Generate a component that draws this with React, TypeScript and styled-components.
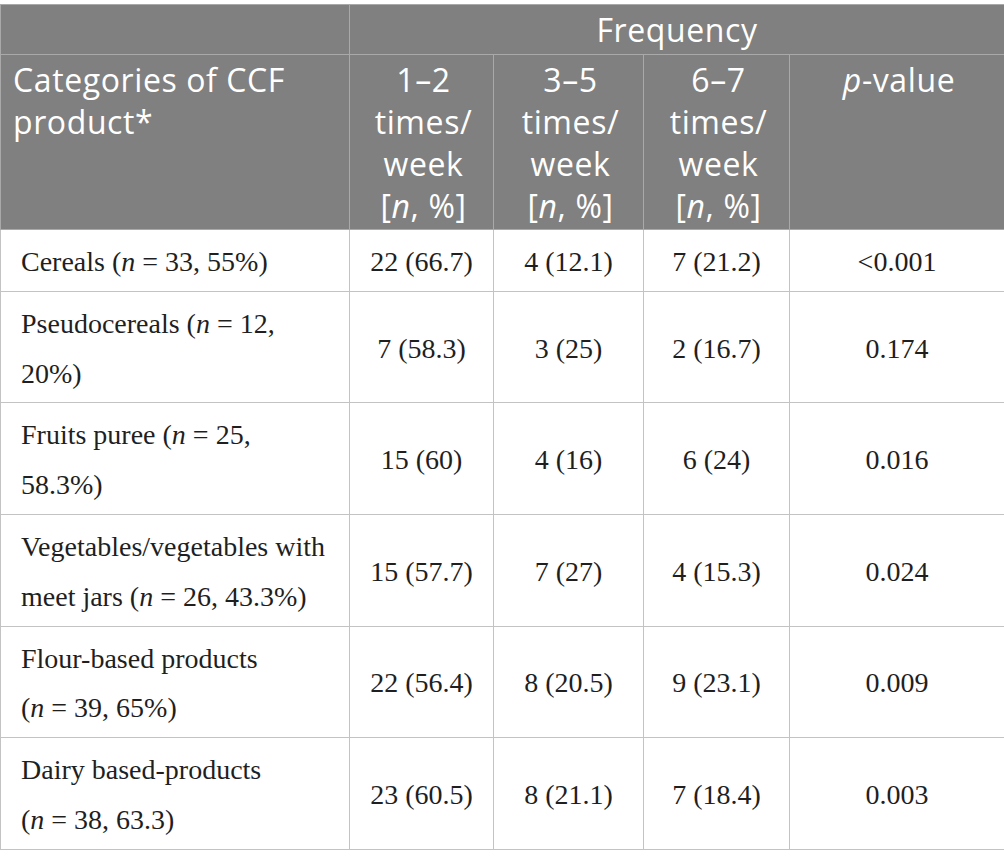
import React from "react";
import styled, { createGlobalStyle } from "styled-components";

const Global = createGlobalStyle`
  html, body { margin: 0; padding: 0; background: #ffffff; }
  body { width: 1004px; }
`;

const Page = styled.div`
  padding-top: 4px;
`;

const Table = styled.table`
  width: 1004px;
  border-collapse: collapse;
  table-layout: fixed;
  border: 1px solid #c3c3c3;
`;

const Head = styled.thead`
  background: #808080;
  color: #ffffff;
  font-family: "Open Sans", "DejaVu Sans", sans-serif;
  font-size: 32px;
  letter-spacing: 0.6px;
  line-height: 42px;
`;

const HeadCell = styled.th<{ $align?: "left" | "center"; $top?: boolean }>`
  border: 1px solid #a9a9a9;
  font-weight: 400;
  text-align: ${(p) => p.$align ?? "center"};
  vertical-align: top;
  padding: ${(p) => (p.$top ? "4px 8px 3px" : "4px 8px 2px 12px")};
  em { font-style: italic; }
`;

const Body = styled.tbody`
  font-family: "Liberation Serif", "Times New Roman", serif;
  font-size: 28px;
  line-height: 49.8px;
  color: #1f1f1f;
`;

const Cell = styled.td<{ $label?: boolean }>`
  border: 1px solid #c3c3c3;
  padding: ${(p) => (p.$label ? "7px 10px 4px 20px" : "7px 6px 4px")};
  text-align: ${(p) => (p.$label ? "left" : "center")};
  vertical-align: middle;
  em { font-style: italic; }
`;

type Row = { label: React.ReactNode; a: string; b: string; c: string; p: string };

const rows: Row[] = [
  { label: <>Cereals (<em>n</em> = 33, 55%)</>, a: "22 (66.7)", b: "4 (12.1)", c: "7 (21.2)", p: "<0.001" },
  { label: <>Pseudocereals (<em>n</em> = 12,<br />20%)</>, a: "7 (58.3)", b: "3 (25)", c: "2 (16.7)", p: "0.174" },
  { label: <>Fruits puree (<em>n</em> = 25,<br />58.3%)</>, a: "15 (60)", b: "4 (16)", c: "6 (24)", p: "0.016" },
  { label: <>Vegetables/vegetables with<br />meet jars (<em>n</em> = 26, 43.3%)</>, a: "15 (57.7)", b: "7 (27)", c: "4 (15.3)", p: "0.024" },
  { label: <>Flour-based products<br />(<em>n</em> = 39, 65%)</>, a: "22 (56.4)", b: "8 (20.5)", c: "9 (23.1)", p: "0.009" },
  { label: <>Dairy based-products<br />(<em>n</em> = 38, 63.3)</>, a: "23 (60.5)", b: "8 (21.1)", c: "7 (18.4)", p: "0.003" },
];

export default function App() {
  return (
    <Page>
      <Global />
      <Table>
        <colgroup>
          <col style={{ width: 349 }} />
          <col style={{ width: 144 }} />
          <col style={{ width: 150 }} />
          <col style={{ width: 146 }} />
          <col style={{ width: 215 }} />
        </colgroup>
        <Head>
          <tr>
            <HeadCell $top />
            <HeadCell $top colSpan={4}>Frequency</HeadCell>
          </tr>
          <tr>
            <HeadCell $align="left">Categories of CCF<br />product*</HeadCell>
            <HeadCell>1–2<br />times/<br />week<br />[<em>n</em>, %]</HeadCell>
            <HeadCell>3–5<br />times/<br />week<br />[<em>n</em>, %]</HeadCell>
            <HeadCell>6–7<br />times/<br />week<br />[<em>n</em>, %]</HeadCell>
            <HeadCell><em>p</em>-value</HeadCell>
          </tr>
        </Head>
        <Body>
          {rows.map((r, i) => (
            <tr key={i}>
              <Cell $label>{r.label}</Cell>
              <Cell>{r.a}</Cell>
              <Cell>{r.b}</Cell>
              <Cell>{r.c}</Cell>
              <Cell>{r.p}</Cell>
            </tr>
          ))}
        </Body>
      </Table>
    </Page>
  );
}
